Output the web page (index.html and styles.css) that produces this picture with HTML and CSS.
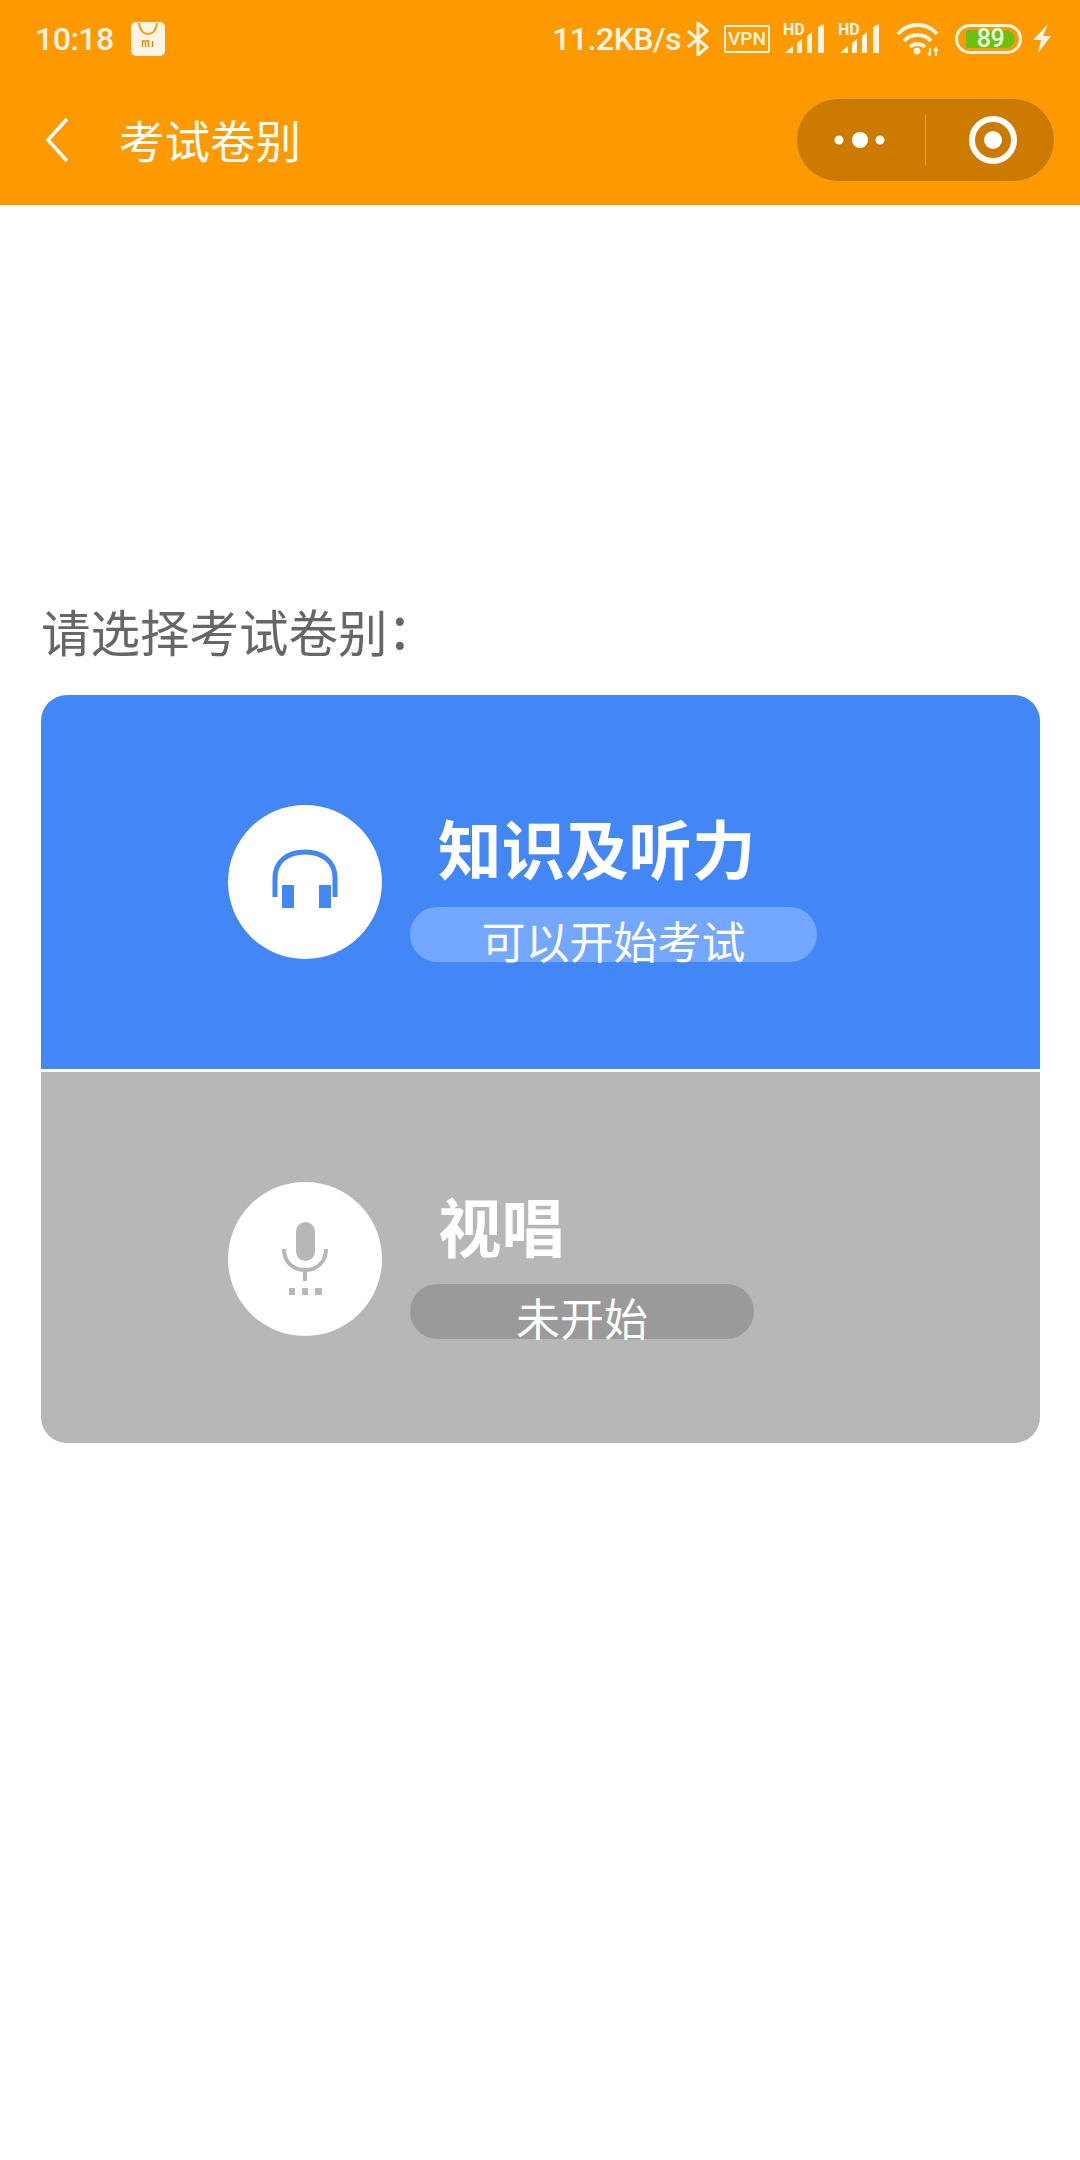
FILE: index.html
```html
<!DOCTYPE html>
<html lang="zh-CN">
<head>
  <meta charset="UTF-8" />
  <meta name="viewport" content="width=device-width, initial-scale=1.0"/>
  <title>考试卷别</title>
  <link rel="stylesheet" href="styles.css">
</head>
<body>

  <header class="header">
    <div class="status-bar">
      <span class="time">10:18</span>
      <svg class="store-icon" width="34" height="34" viewBox="0 0 34 34">
        <rect width="34" height="34" rx="5" fill="#fff5e6"/>
        <path d="M8 1c1 8 5 11 9 11s8-3 9-11" fill="none" stroke="#ff9900" stroke-width="2"/>
        <path d="M11.500 25v-6h6v6M14.500 20v5M21.500 19v6" fill="none" stroke="#e08a10" stroke-width="1.500"/>
      </svg>
      <div class="status-right">
        <span class="speed">11.2KB/s</span>
        <svg width="22" height="34" viewBox="0 0 22 34">
          <path d="M1 9l19 16-9 8V1l9 8L1 25" fill="none" stroke="#fff5e6" stroke-width="3"/>
        </svg>
        <span class="vpn">VPN</span>
        <span class="signal">
          <span class="hd">HD</span>
          <svg width="41" height="30" viewBox="0 0 41 30">
            <path d="M2 29l8-7v7zM14 29V19l5-4v14zM24 29V12l5-4v21zM35 29V3l6-3v29z" fill="#fff5e6"/>
          </svg>
        </span>
        <span class="signal">
          <span class="hd">HD</span>
          <svg width="41" height="30" viewBox="0 0 41 30">
            <path d="M2 29l8-7v7zM14 29V19l5-4v14zM24 29V12l5-4v21zM35 29V3l6-3v29z" fill="#fff5e6"/>
          </svg>
        </span>
        <svg class="wifi" width="43" height="36" viewBox="0 0 43 36">
          <path d="M2 13C12 1 31 1 41 13M8 20C15 12 28 12 35 20M14 26c4-4 11-4 15 0" fill="none" stroke="#fff5e6" stroke-width="3.800"/>
          <circle cx="21" cy="30" r="3.400" fill="#fff5e6"/>
          <path d="M34 27v8M32 32l2 3M40 35v-8M38 30l2-3 2 3" fill="none" stroke="#fff5e6" stroke-width="1.800"/>
        </svg>
        <span class="battery"><span class="battery-level">89</span></span>
        <svg class="bolt" width="20" height="31" viewBox="0 0 20 31">
          <path d="M16 1L1 17h8L6 30l13-17h-8z" fill="#fff5e6"/>
        </svg>
      </div>
    </div>

    <nav class="nav">
      <svg class="back" width="24" height="46" viewBox="0 0 24 46">
        <path d="M22 2L3 23l19 21" fill="none" stroke="#fff" stroke-width="3.500"/>
      </svg>
      <span class="nav-title">考试卷别</span>
      <div class="capsule">
        <svg width="128" height="82" viewBox="0 0 128 82">
          <circle cx="42" cy="41" r="4.500" fill="#fff"/>
          <circle cx="63" cy="41" r="8" fill="#fff"/>
          <circle cx="83" cy="41" r="4.500" fill="#fff"/>
        </svg>
        <span class="capsule-line"></span>
        <svg width="128" height="82" viewBox="0 0 128 82">
          <circle cx="67" cy="41" r="21" fill="none" stroke="#fff" stroke-width="6"/>
          <circle cx="67" cy="41" r="9" fill="#fff"/>
        </svg>
      </div>
    </nav>
  </header>

  <main class="content">
    <h2 class="label">请选择考试卷别<span class="colon">:</span></h2>

    <div class="paper-list">
      <div class="paper paper-active">
        <div class="paper-icon">
          <svg class="headphones" width="70" height="62" viewBox="0 0 70 62">
            <path d="M5 49V30C5 13 18 4 35 4s30 9 30 26v19" fill="none" stroke="#4386f6" stroke-width="5"/>
            <rect x="12" y="37" width="12" height="23" fill="#4386f6"/>
            <rect x="49" y="37" width="12" height="23" fill="#4386f6"/>
          </svg>
        </div>
        <div class="paper-info">
          <div class="paper-name">知识及听力</div>
          <div class="paper-state state-wide">可以开始考试</div>
        </div>
      </div>

      <div class="paper paper-off">
        <div class="paper-icon">
          <svg width="48" height="76" viewBox="0 0 48 76">
            <rect x="15" y="1" width="19" height="39" rx="9.500" fill="#b7b7b7"/>
            <path d="M3 28c0 13 9 21 21 21s21-8 21-21M24 49v11" fill="none" stroke="#b7b7b7" stroke-width="4"/>
            <rect x="8" y="67" width="6" height="7" fill="#b7b7b7"/>
            <rect x="21" y="67" width="6" height="7" fill="#b7b7b7"/>
            <rect x="34" y="67" width="7" height="7" fill="#b7b7b7"/>
          </svg>
        </div>
        <div class="paper-info">
          <div class="paper-name">视唱</div>
          <div class="paper-state state-narrow">未开始</div>
        </div>
      </div>
    </div>
  </main>

</body>
</html>
```

FILE: styles.css
```css
body {
  font-family: "Noto Sans CJK SC", "Noto Sans", sans-serif;
  margin: 0;
  background: #fff;
}

.header {
  height: 205px;
  background: #ff9900;
}

.status-bar {
  height: 75px;
  box-sizing: border-box;
  padding: 2px 28px 0 35px;
  display: flex;
  align-items: center;
  color: #fff5e6;
  font-family: Roboto, sans-serif;
  font-weight: 500;
  font-size: 32px;
  letter-spacing: -0.5px;
}

.store-icon {
  margin-left: 17px;
}

.status-right {
  margin-left: auto;
  display: flex;
  align-items: center;
  gap: 14px;
}

.speed {
  margin-right: -8px;
}

.vpn {
  width: 42px;
  height: 24px;
  margin: 0 -1px 0 1px;
  border: 2.500px solid #fff5e6;
  border-radius: 2px;
  font-size: 19px;
  line-height: 24px;
  text-align: center;
  letter-spacing: 0;
}

.signal {
  position: relative;
  width: 41px;
  height: 30px;
  display: block;
}

.signal svg {
  display: block;
}

.hd {
  position: absolute;
  left: 0;
  top: 0;
  font-size: 16px;
  font-weight: 700;
  line-height: 12px;
  letter-spacing: 0;
}

.wifi {
  margin-left: 3px;
}

.battery {
  width: 67px;
  height: 30px;
  box-sizing: border-box;
  border: 3px solid #fff5e6;
  border-radius: 15px;
  padding: 3px 4px 3px 8px;
  margin-left: 2px;
  display: flex;
}

.battery-level {
  flex: 1;
  background: #6dbf10;
  border-radius: 2px 9px 9px 2px;
  color: #eaf8dc;
  font-size: 25px;
  line-height: 18px;
  text-align: center;
}

.bolt {
  margin-left: -4px;
}

.nav {
  height: 130px;
  display: flex;
  align-items: center;
  padding: 0 25px 0 45px;
  color: #fff;
}

.nav-title {
  margin-left: 50px;
  padding-bottom: 3px;
  font-size: 45.500px;
}

.capsule {
  margin-left: auto;
  width: 259px;
  height: 84px;
  box-sizing: border-box;
  border: 1px solid #e8a030;
  border-radius: 42px;
  background: #cc7a00;
  display: flex;
  align-items: center;
  overflow: hidden;
}

.capsule svg {
  flex: none;
}

.capsule-line {
  flex: none;
  width: 1px;
  height: 50px;
  background: #e0a040;
}

.content {
  padding: 391px 40px 0 41px;
}

.label {
  margin: 0 0 29px;
  font-size: 49.500px;
  font-weight: 400;
  line-height: 70px;
  color: #666;
}

.colon {
  margin-left: 4px;
  font-size: 60px;
  line-height: 50px;
  vertical-align: 3px;
}

.paper-list {
  border-radius: 26px;
  overflow: hidden;
}

.paper {
  height: 374px;
  box-sizing: border-box;
  display: flex;
  align-items: center;
  padding-left: 187px;
  color: #fff;
}

.paper-active {
  background: #4386f6;
}

.paper-off {
  height: 371px;
  margin-top: 3px;
  padding-top: 3px;
  background: #b7b7b7;
}

.paper-icon {
  width: 154px;
  height: 154px;
  border-radius: 50%;
  background: #fff;
  display: flex;
  align-items: center;
  justify-content: center;
}

.headphones {
  margin-bottom: 7px;
}

.paper-info {
  margin-left: 28px;
}

.paper-name {
  padding-left: 28px;
  font-size: 63.500px;
  font-weight: 700;
  line-height: 88px;
}

.paper-state {
  height: 55px;
  box-sizing: border-box;
  margin-top: 17px;
  padding-top: 11px;
  border-radius: 28px;
  font-size: 44px;
  line-height: 44px;
  text-align: center;
}

.paper-off .paper-state {
  margin-top: 16px;
}

.state-wide {
  width: 407px;
  background: #74a7ff;
}

.state-narrow {
  width: 344px;
  background: #9a9a9a;
}
```
